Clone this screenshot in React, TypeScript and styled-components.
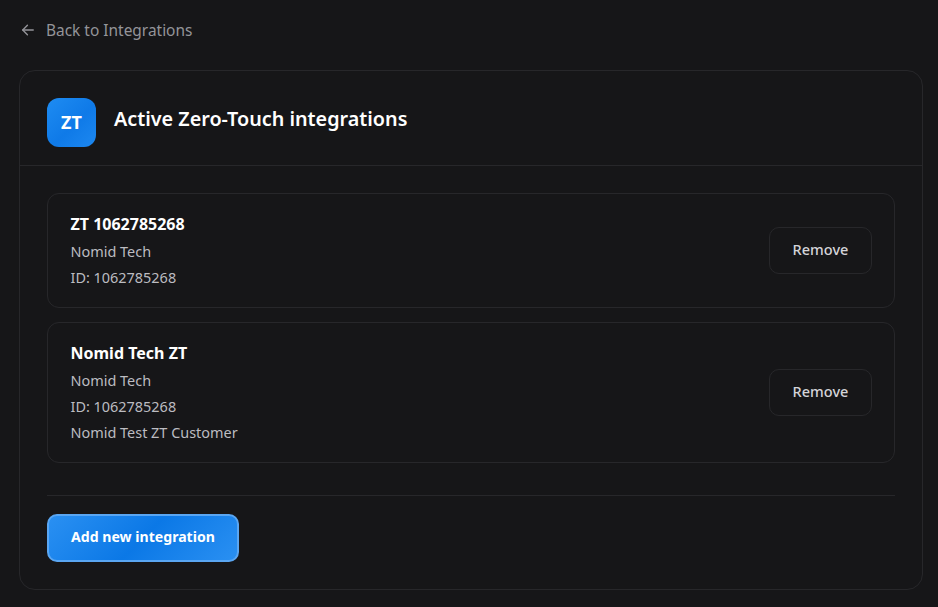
import React from "react";
import styled, { createGlobalStyle } from "styled-components";

const Global = createGlobalStyle`
  html, body { margin: 0; padding: 0; background: #161618; }
  body { font-family: "Noto Sans", "Open Sans", sans-serif; }
`;

const Page = styled.div`
  width: 938px;
  height: 607px;
  box-sizing: border-box;
  padding: 19px 15px 17px 19px;
  background: #161618;
  overflow: hidden;
`;

const BackLink = styled.a`
  display: flex;
  align-items: center;
  gap: 11px;
  height: 22px;
  margin-bottom: 29px;
  padding-left: 2px;
  color: #949499;
  font-size: 15.45px;
  line-height: 22px;
`;

const Card = styled.section`
  box-sizing: border-box;
  width: 904px;
  height: 520px;
  border: 1px solid #27272a;
  border-radius: 16px;
`;

const CardHeader = styled.header`
  display: flex;
  align-items: flex-start;
  gap: 18px;
  height: 95px;
  box-sizing: border-box;
  padding: 27px 27px 0;
  border-bottom: 1px solid #27272a;
`;

const Badge = styled.div`
  width: 49px;
  height: 49px;
  box-sizing: border-box;
  padding-bottom: 2px;
  border-radius: 12px;
  display: flex;
  align-items: center;
  justify-content: center;
  background: linear-gradient(135deg, #1e8cf2 0%, #0f7ae8 55%, #1d88f0 100%);
  color: #fff;
  font-size: 18px;
  font-weight: 700;
`;

const Title = styled.h1`
  margin: 7px 0 0;
  color: #fff;
  font-size: 19.75px;
  line-height: 28px;
  font-weight: 600;
`;

const CardBody = styled.div`
  padding: 27px 27px 0;
`;

const List = styled.div`
  display: flex;
  flex-direction: column;
  gap: 14px;
`;

const Item = styled.article<{ $h: number }>`
  box-sizing: border-box;
  height: ${(p) => p.$h}px;
  display: flex;
  align-items: center;
  justify-content: space-between;
  padding: 0 22px 0 22.5px;
  border: 1px solid #27272a;
  border-radius: 12px;
`;

const Info = styled.div`
  display: flex;
  flex-direction: column;
  padding-top: 3px;
`;

const Name = styled.div`
  color: #fff;
  font-size: 16px;
  line-height: 22px;
  font-weight: 700;
  margin-bottom: 4px;
`;

const Line = styled.div`
  color: #bcbcc1;
  font-size: 14.45px;
  line-height: 26px;
`;

const RemoveButton = styled.button`
  width: 103px;
  height: 47px;
  box-sizing: border-box;
  background: transparent;
  border: 1px solid #27272a;
  border-radius: 10px;
  color: #d4d4d8;
  font-family: inherit;
  font-size: 14.5px;
  font-weight: 500;
  line-height: 20px;
  padding: 0 0 3px;
`;

const Divider = styled.hr`
  border: 0;
  border-top: 1px solid #27272a;
  margin: 32px 0 18px;
`;

const AddButton = styled.button`
  width: 192px;
  height: 48px;
  box-sizing: border-box;
  border: 2px solid #5aa6f2;
  border-radius: 10px;
  background: linear-gradient(135deg, #2a90f2 0%, #0b78e6 50%, #2a90f2 100%);
  color: #fff;
  font-family: inherit;
  font-size: 14.1px;
  font-weight: 700;
  line-height: 20px;
  padding: 0 0 2px;
`;

const ArrowIcon = () => (
  <svg width="14" height="14" viewBox="0 0 24 24" fill="none" stroke="#949499" strokeWidth="2.4" strokeLinecap="round" strokeLinejoin="round">
    <path d="M21 12H3" />
    <path d="M11 4l-8 8 8 8" />
  </svg>
);

export default function App() {
  return (
    <Page>
      <Global />
      <BackLink>
        <ArrowIcon />
        Back to Integrations
      </BackLink>
      <Card>
        <CardHeader>
          <Badge>ZT</Badge>
          <Title>Active Zero-Touch integrations</Title>
        </CardHeader>
        <CardBody>
          <List>
            <Item $h={115}>
              <Info>
                <Name>ZT 1062785268</Name>
                <Line>Nomid Tech</Line>
                <Line>ID: 1062785268</Line>
              </Info>
              <RemoveButton>Remove</RemoveButton>
            </Item>
            <Item $h={141}>
              <Info>
                <Name>Nomid Tech ZT</Name>
                <Line>Nomid Tech</Line>
                <Line>ID: 1062785268</Line>
                <Line>Nomid Test ZT Customer</Line>
              </Info>
              <RemoveButton>Remove</RemoveButton>
            </Item>
          </List>
          <Divider />
          <AddButton>Add new integration</AddButton>
        </CardBody>
      </Card>
    </Page>
  );
}
